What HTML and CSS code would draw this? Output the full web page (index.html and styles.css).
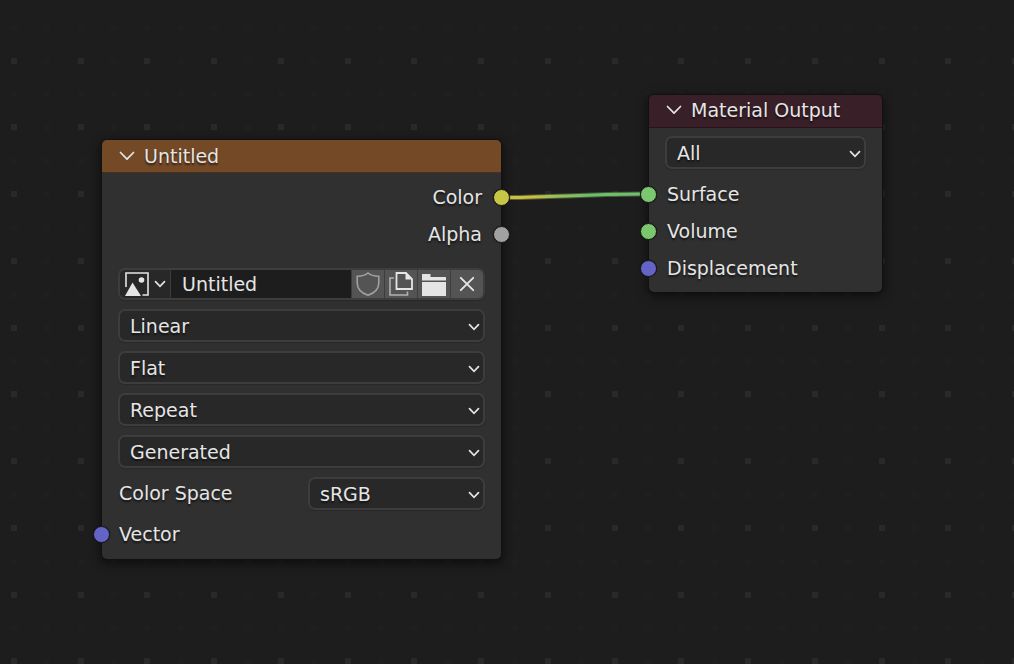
FILE: index.html
```html
<!DOCTYPE html>
<html lang="en">
<head>
<meta charset="utf-8">
<title>Shader Editor</title>
<link rel="stylesheet" href="styles.css">
</head>
<body>
<svg class="symbols" aria-hidden="true">
  <symbol id="fold" viewBox="0 0 16 10"><path d="M1.500 1.500 8 8.200 14.500 1.500" fill="none" stroke="currentColor" stroke-width="1.700" stroke-linecap="round" stroke-linejoin="round"/></symbol>
  <symbol id="caret" viewBox="0 0 12 8"><path d="M1.500 1.700 6 6.300 10.500 1.700" fill="none" stroke="currentColor" stroke-width="1.700" stroke-linecap="round"/></symbol>
</svg>
<main class="canvas">
  <svg class="grid" aria-hidden="true">
    <defs>
      <pattern id="dots" x="11" y="58" width="267" height="267" patternUnits="userSpaceOnUse">
        <g fill="none" stroke-width="6">
          <path class="minor" stroke-dasharray="6 27 6 28 6 27 6 27 6 28 6 27 6 28 6 27" d="M0 3H267M0 36H267M0 70H267M0 103H267M0 136H267M0 170H267M0 203H267M0 237H267"/>
          <path class="major" stroke-dasharray="6 61 6 60 6 61 6 61" d="M0 3H267M0 69H267M0 136H267M0 203H267"/>
        </g>
      </pattern>
    </defs>
    <rect width="100%" height="100%" fill="url(#dots)"/>
  </svg>

  <section class="node node-image" aria-label="Image Texture">
    <header class="node-header">
      <button class="fold" aria-label="Collapse"><svg width="16" height="10"><use href="#fold"/></svg></button>
      <h2>Untitled</h2>
    </header>
    <div class="sockets outputs">
      <div class="socket out yellow">Color</div>
      <div class="socket out gray">Alpha</div>
    </div>
    <div class="fields">
      <div class="id-row">
        <button class="browse" aria-label="Browse image">
          <svg width="24" height="24" viewBox="0 0 24 24"><path d="M1 15V1H23V23H17.500" fill="none" stroke="currentColor" stroke-width="1.600"/><path d="M0 24 7.500 10.500 16 24Z" fill="currentColor"/><circle cx="16.500" cy="8" r="2.800" fill="currentColor"/></svg>
          <svg width="12" height="8"><use href="#caret"/></svg>
        </button>
        <input type="text" value="Untitled" aria-label="Image name">
        <button class="tool dim" aria-label="Fake user"><svg width="24" height="24" viewBox="0 0 24 24"><path d="M12 1C9.500 3.300 5.500 4.200 1.200 4.200V11C1.200 17 5.500 21 12 23.300 18.500 21 22.800 17 22.800 11V4.200C18.500 4.200 14.500 3.300 12 1Z" fill="none" stroke="currentColor" stroke-width="1.600"/></svg></button>
        <button class="tool" aria-label="New image"><svg width="24" height="24" viewBox="0 0 24 24"><path d="M5 6H1V23H18.500V19.500" fill="none" stroke="currentColor" stroke-width="1.600" opacity=".65"/><path d="M7.500 1H17L23 7V17H7.500Z" fill="none" stroke="currentColor" stroke-width="1.800"/><path d="M16.500 0.500V7.500H23.500Z" fill="currentColor"/></svg></button>
        <button class="tool" aria-label="Open image"><svg width="24" height="24" viewBox="0 0 24 24"><path d="M0 8.500V2.500Q0 2 .5 2H8.500V5H23.500Q24 5 24 5.500V8.500ZM0 10H24V23.500Q24 24 23.500 24H.5Q0 24 0 23.500Z" fill="currentColor"/></svg></button>
        <button class="tool" aria-label="Unlink"><svg width="24" height="24" viewBox="0 0 24 24"><path d="M5.800 5.800 18.200 18.200M18.200 5.800 5.800 18.200" stroke="currentColor" stroke-width="1.900" stroke-linecap="round"/></svg></button>
      </div>
      <div class="select"><select aria-label="Interpolation"><option>Linear</option></select><svg width="12" height="8"><use href="#caret"/></svg></div>
      <div class="select"><select aria-label="Projection"><option>Flat</option></select><svg width="12" height="8"><use href="#caret"/></svg></div>
      <div class="select"><select aria-label="Extension"><option>Repeat</option></select><svg width="12" height="8"><use href="#caret"/></svg></div>
      <div class="select"><select aria-label="Source"><option>Generated</option></select><svg width="12" height="8"><use href="#caret"/></svg></div>
      <div class="labelled">
        <label for="space">Color Space</label>
        <div class="select"><select id="space"><option>sRGB</option></select><svg width="12" height="8"><use href="#caret"/></svg></div>
      </div>
    </div>
    <div class="socket in blue">Vector</div>
  </section>

  <section class="node node-output" aria-label="Material Output">
    <header class="node-header">
      <button class="fold" aria-label="Collapse"><svg width="16" height="10"><use href="#fold"/></svg></button>
      <h2>Material Output</h2>
    </header>
    <div class="fields">
      <div class="select"><select aria-label="Target"><option>All</option></select><svg width="12" height="8"><use href="#caret"/></svg></div>
    </div>
    <div class="sockets">
      <div class="socket in green">Surface</div>
      <div class="socket in green">Volume</div>
      <div class="socket in blue">Displacement</div>
    </div>
  </section>

  <svg class="link" width="132" height="12" viewBox="0 0 132 12" aria-hidden="true">
    <defs>
      <linearGradient id="wire" gradientUnits="userSpaceOnUse" x1="0" y1="0" x2="132" y2="0"><stop offset=".2" stop-color="#c7c145"/><stop offset=".3" stop-color="#a5bf58"/><stop offset=".6" stop-color="#6fbd67"/><stop offset="1" stop-color="#72bf6c"/></linearGradient>
    </defs>
    <path d="M0 7.500C45 7 75 4.500 132 4" fill="none" stroke="url(#wire)" stroke-width="5" opacity=".4"/>
    <path d="M0 7.500C45 7 75 4.500 132 4" fill="none" stroke="url(#wire)" stroke-width="3"/>
  </svg>
</main>
</body>
</html>
```

FILE: styles.css
```css
* { box-sizing: border-box; }

body {
  margin: 0;
  background: #1d1d1d;
  color: #e5e5e5;
  font: 19px/24px "DejaVu Sans", sans-serif;
}

button, input, select {
  margin: 0;
  padding: 0;
  border: 0;
  border-radius: 0;
  background: none;
  color: inherit;
  font: inherit;
}

svg { display: block; }
.symbols { position: absolute; width: 0; height: 0; }

.canvas {
  position: relative;
  min-height: 100vh;
  overflow: hidden;
}

.grid { position: absolute; width: 100%; height: 100%; }
.minor { stroke: #1f1f1f; }
.major { stroke: #292929; }

.node {
  position: absolute;
  border-radius: 5px;
  background: #303030;
  box-shadow: 0 0 0 1px #111, 0 3px 10px 2px rgba(0, 0, 0, 0.5);
  text-shadow: 0 2px 2px rgba(0, 0, 0, 0.6);
}

.node-image { left: 102px; top: 140px; width: 399px; padding-bottom: 7px; }
.node-output { left: 649px; top: 95px; width: 233px; padding-bottom: 6px; }

.node-header {
  display: flex;
  align-items: center;
  gap: 9px;
  height: 33px;
  padding: 0 17px 1px;
  border-radius: 5px 5px 0 0;
}

.node-header h2 { margin: 0; font: inherit; }
.node-image .node-header { background: #744926; border-bottom: 1px solid #49301c; }
.node-output .node-header { background: #391f28; border-bottom: 1px solid #291319; padding-bottom: 2px; }

.fields {
  display: flex;
  flex-direction: column;
  gap: 9px;
  padding: 0 16px;
}

.node-output .fields { padding-top: 8px; }
.outputs { padding: 5px 0 16px; }
.node-output .sockets { padding-top: 6px; }

.socket {
  position: relative;
  display: flex;
  align-items: center;
  height: 37px;
  padding: 0 18px;
}

.node-image > .socket { margin-top: 5px; padding-left: 17px; }
.out { justify-content: flex-end; padding-right: 19px; }

.socket::before {
  content: "";
  position: absolute;
  top: 11px;
  left: -9px;
  width: 15px;
  height: 15px;
  border: 1px solid #161616;
  border-radius: 50%;
  box-shadow: 0 0 1px #111;
  z-index: 2;
}

.out::before { left: auto; right: -9px; }
.yellow::before { background: #c7c745; }
.gray::before { background: #a1a1a1; }
.green::before { background: #7bc76f; }
.blue::before { background: #6464c7; }

.id-row {
  display: flex;
  gap: 1px;
  height: 32px;
  border: 2px solid #3d3d3d;
  border-radius: 7px;
  background: #3d3d3d;
  box-shadow: 0 1px 1px #282828;
  overflow: hidden;
}

.browse {
  display: flex;
  align-items: center;
  gap: 5px;
  width: 50px;
  padding-left: 5px;
  background: #282828;
}

.id-row input {
  flex: 1;
  min-width: 0;
  padding-left: 11px;
  background: #1d1d1d;
  text-shadow: none;
}

.tool {
  display: grid;
  place-items: center;
  width: 32px;
  background: #545454;
}

.dim { color: #a0a0a0; }

.select { display: grid; align-items: center; }
.select > * { grid-area: 1 / 1; }
.select svg { justify-self: end; margin: 3px 5px 0 0; pointer-events: none; }

.select select {
  width: 100%;
  height: 33px;
  padding: 0 24px 0 10px;
  border: 2px solid #3d3d3d;
  border-radius: 7px;
  background: #282828;
  box-shadow: 0 1px 1px #282828;
  appearance: none;
  text-shadow: inherit;
}

.labelled {
  display: grid;
  grid-template-columns: 190px 1fr;
  align-items: center;
}

.labelled label { padding: 0 0 1px 1px; }

.link { position: absolute; left: 509px; top: 190px; }
```
